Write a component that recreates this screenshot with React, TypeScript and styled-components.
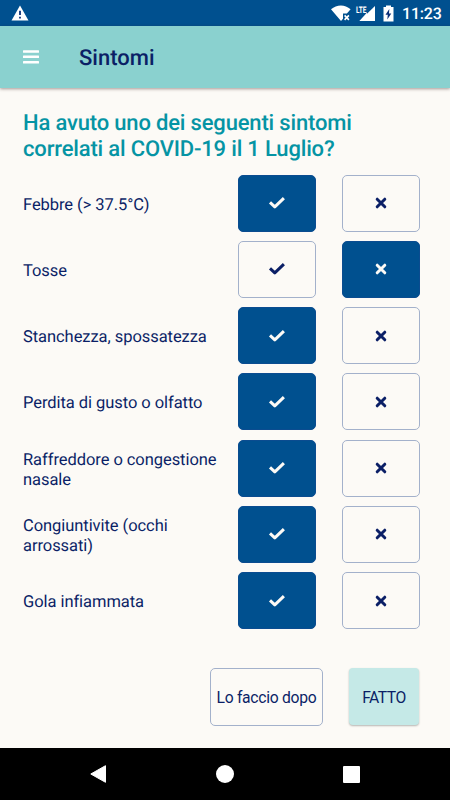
import React from "react";
import styled, { createGlobalStyle } from "styled-components";

const navy = "#0b1f66";
const blue = "#00508f";
const cream = "#fcfaf6";

const GlobalStyle = createGlobalStyle`
  * { box-sizing: border-box; }
  body { margin: 0; background: ${cream}; }
  button { font: inherit; color: inherit; padding: 0; margin: 0; }
`;

const Screen = styled.div`
  width: 450px;
  height: 800px;
  display: flex;
  flex-direction: column;
  overflow: hidden;
  background: ${cream};
  color: ${navy};
  font-family: Roboto, sans-serif;
  font-size: 16px;
  text-rendering: geometricPrecision;
`;

const StatusBar = styled.div`
  height: 26px;
  flex: none;
  display: flex;
  align-items: center;
  padding: 0 8px 0 11px;
  background: ${blue};
  color: #fff;
`;

const StatusIcons = styled.div`
  display: flex;
  align-items: center;
  margin-left: auto;
`;

const BatteryIcon = styled.svg`
  margin-left: 8px;
`;

const Clock = styled.span`
  width: 40px;
  margin-left: 8px;
  padding-top: 2px;
  font-size: 16px;
  font-weight: 500;
  letter-spacing: -0.2px;
  line-height: 26px;
  white-space: nowrap;
`;

const Header = styled.header`
  height: 62px;
  flex: none;
  display: flex;
  align-items: center;
  padding: 0 23px;
  background: #8ad1cf;
  box-shadow: 0 1px 3px rgba(60, 30, 30, 0.45);
`;

const MenuButton = styled.button`
  display: flex;
  width: 56px;
  border: 0;
  background: none;
`;

const PageTitle = styled.h1`
  margin: 0;
  padding-top: 3px;
  font-size: 22px;
  font-weight: 500;
  line-height: 26px;
`;

const Content = styled.main`
  flex: 1;
  min-height: 0;
  padding: 23.2px 31px 0 23px;
`;

const Question = styled.h2`
  margin: 0 0 12.4px;
  color: #0594a4;
  font-size: 22px;
  font-weight: 500;
  line-height: 25.5px;
  letter-spacing: -0.17px;
  white-space: nowrap;
`;

const SymptomList = styled.div`
  display: grid;
  grid-auto-rows: 57px;
  row-gap: 9.25px;
`;

const SymptomRow = styled.div`
  display: grid;
  grid-template-columns: 215px 78px 78px;
  column-gap: 0;
  justify-content: start;
  align-items: center;
  & > :last-child { margin-left: 25.7px; }
`;

const Label = styled.div`
  font-size: 16.5px;
  line-height: 20px;
  letter-spacing: -0.06px;
  padding-top: 5px;
  white-space: nowrap;
`;

const Choice = styled.button<{ $selected: boolean }>`
  width: 78px;
  height: 57px;
  display: flex;
  align-items: center;
  justify-content: center;
  border: 1px solid ${(p) => (p.$selected ? "#0b4c90" : "#a3b1cb")};
  border-radius: 5px;
  background: ${(p) => (p.$selected ? blue : cream)};
  color: ${(p) => (p.$selected ? cream : navy)};
`;

const Actions = styled.div`
  display: flex;
  justify-content: flex-end;
  gap: 26px;
  margin-top: 39.2px;
`;

const LaterButton = styled.button`
  width: 113px;
  height: 58px;
  border: 1px solid #a3b1cb;
  border-radius: 5px;
  background: ${cream};
  font-size: 15.7px;
  letter-spacing: -0.28px;
  white-space: nowrap;
`;

const DoneButton = styled.button`
  width: 70px;
  height: 57px;
  padding-top: 2px;
  border: 0;
  border-radius: 4px;
  background: #c5e9e7;
  box-shadow: 0 1px 2px rgba(0, 0, 0, 0.28);
  font-size: 15.7px;
  letter-spacing: -0.5px;
`;

const NavBar = styled.nav`
  height: 52px;
  flex: none;
  display: flex;
  align-items: center;
  justify-content: space-between;
  padding: 0 90px;
  background: #000;
`;

const CheckIcon = () => (
  <svg width="18" height="14" viewBox="0 0 18 14" fill="none" stroke="currentColor" strokeWidth="3" strokeLinejoin="round">
    <path d="M2 6.3 6.8 10.8 15.9 2.1" />
  </svg>
);

const CrossIcon = () => (
  <svg width="12" height="12" viewBox="0 0 12 12" fill="none" stroke="currentColor" strokeWidth="3" strokeLinecap="round">
    <path d="M2.2 2.2 9.8 9.8M9.8 2.2 2.2 9.8" />
  </svg>
);

const symptoms: { label: React.ReactNode; yes: boolean }[] = [
  { label: "Febbre (> 37.5°C)", yes: true },
  { label: "Tosse", yes: false },
  { label: "Stanchezza, spossatezza", yes: true },
  { label: "Perdita di gusto o olfatto", yes: true },
  { label: <>Raffreddore o congestione<br />nasale</>, yes: true },
  { label: <>Congiuntivite (occhi<br />arrossati)</>, yes: true },
  { label: "Gola infiammata", yes: true },
];

export default function App() {
  return (
    <Screen>
      <GlobalStyle />
      <StatusBar>
        <svg width="18" height="16" viewBox="0 0 18 16">
          <path d="M9 .5 17.5 15.5H.5Z" fill="#fff" />
          <path d="M9 5.8v4.3M9 11.8v1.8" stroke="#0b2f78" strokeWidth="1.8" />
        </svg>
        <StatusIcons>
          <svg width="22" height="18" viewBox="0 0 22 18">
            <path d="M0 5.3C5.8.1 14 .1 19.6 5.3L15.9 9.6H12v5.2L10 17Z" fill="#fff" />
            <path d="m13.6 11.4 4.3 4.5m0-4.5-4.3 4.5" stroke="#fff" strokeWidth="1.6" />
          </svg>
          <svg width="22" height="18" viewBox="0 0 22 18">
            <path d="M22 2v15H6.5Z" fill="#fff" />
            <path d="M3 0h11v9H3Z" fill={blue} />
            <path d="M14 8.5 6.5 17H14Z" fill="#fff" />
            <text x="3" y="8.5" fill="#fff" fontFamily="Roboto, sans-serif" fontSize="9" fontWeight="700" textLength="10.5" lengthAdjust="spacingAndGlyphs">LTE</text>
          </svg>
          <BatteryIcon width="11" height="17" viewBox="0 0 11 17">
            <path d="M.5 2H3V.4h5V2h2.5v14.5H.5Z" fill="#fff" />
            <path d="M6.3 4 2.5 9.8h2.3l-.5 4.6 4-6H6Z" fill="#0b2f78" />
          </BatteryIcon>
          <Clock>11:23</Clock>
        </StatusIcons>
      </StatusBar>
      <Header>
        <MenuButton aria-label="Menu">
          <svg width="16" height="14" viewBox="0 0 16 14" fill="#fff">
            <rect y="0.3" width="16" height="2.5" rx=".5" />
            <rect y="5.6" width="16" height="2.5" rx=".5" />
            <rect y="10.9" width="16" height="2.5" rx=".5" />
          </svg>
        </MenuButton>
        <PageTitle>Sintomi</PageTitle>
      </Header>
      <Content>
        <Question>
          Ha avuto uno dei seguenti sintomi
          <br />
          correlati al COVID-19 il 1 Luglio?
        </Question>
        <SymptomList>
          {symptoms.map((s, i) => (
            <SymptomRow key={i}>
              <Label>{s.label}</Label>
              <Choice $selected={s.yes} aria-label="Sì"><CheckIcon /></Choice>
              <Choice $selected={!s.yes} aria-label="No"><CrossIcon /></Choice>
            </SymptomRow>
          ))}
        </SymptomList>
        <Actions>
          <LaterButton>Lo faccio dopo</LaterButton>
          <DoneButton>FATTO</DoneButton>
        </Actions>
      </Content>
      <NavBar>
        <svg width="17" height="18" viewBox="0 0 17 18"><path d="M15.5 .7v16.6L.8 9Z" fill="#fff" stroke="#fff" strokeLinejoin="round" /></svg>
        <svg width="18" height="18" viewBox="0 0 18 18"><circle cx="9" cy="9" r="9" fill="#fff" /></svg>
        <svg width="17" height="17" viewBox="0 0 17 17"><rect width="17" height="17" rx="1" fill="#fff" /></svg>
      </NavBar>
    </Screen>
  );
}
